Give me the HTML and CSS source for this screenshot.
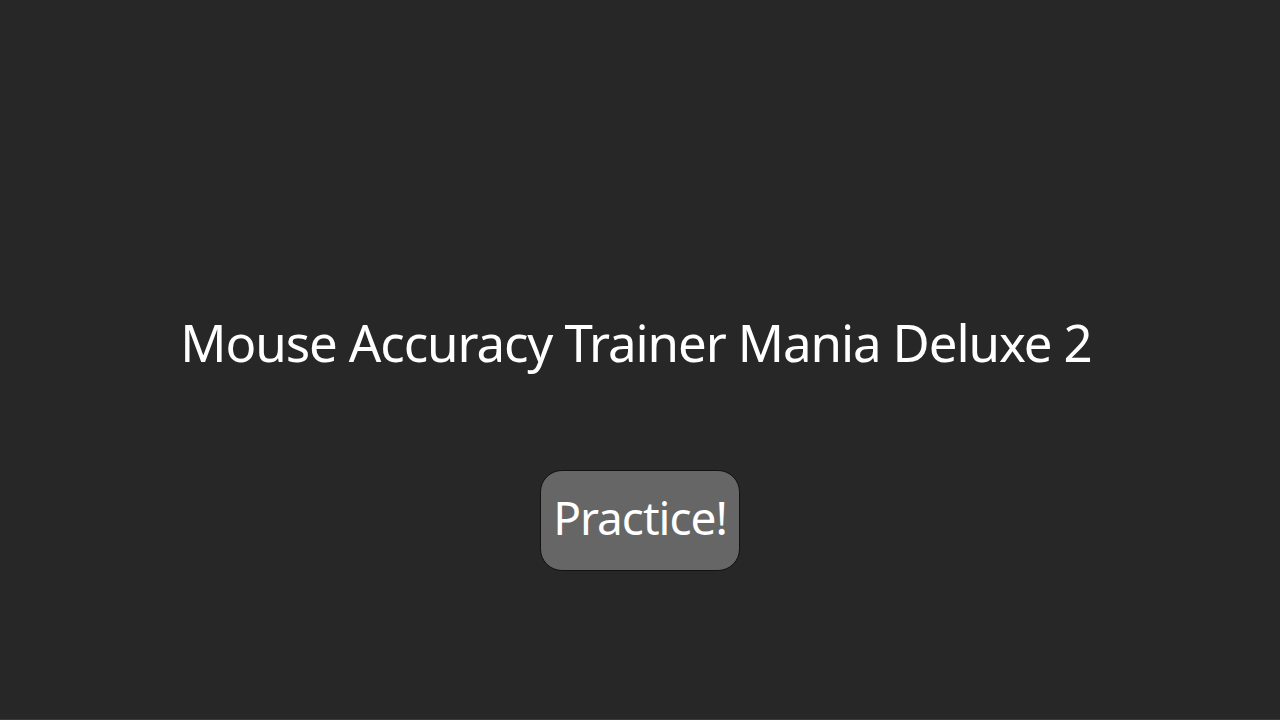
FILE: index.html
```html
<!DOCTYPE html>
<html>
<head>
<meta charset="utf-8">
<link rel="stylesheet" href="styles.css">
</head>
<body>
<main class="screen">
  <h1 class="title">Mouse Accuracy Trainer Mania Deluxe 2</h1>
  <button class="practice">Practice!</button>
</main>
</body>
</html>
```
FILE: styles.css
```css
html, body {
  margin: 0;
  padding: 0;
  height: 100%;
  background: #272727;
}
.screen {
  height: 719px;
  border-bottom: 1px solid #3a3a44;
  display: flex;
  flex-direction: column;
  align-items: center;
  font-family: "Noto Sans", sans-serif;
  color: #ffffff;
}
.title {
  margin: 306px 0 0 0;
  padding-right: 8px;
  font-weight: 400;
  font-size: 51px;
  line-height: 72px;
  letter-spacing: -1.1px;
}
.practice {
  margin-top: 92px;
  width: 200px;
  height: 101px;
  background: #666666;
  border: 1px solid #111111;
  border-radius: 22px;
  color: #ffffff;
  font-family: "Noto Sans", sans-serif;
  font-size: 46px;
  letter-spacing: -1px;
  padding: 0 0 8px 0;
}
```
